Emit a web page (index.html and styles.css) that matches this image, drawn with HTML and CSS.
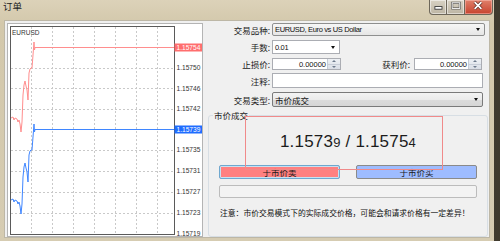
FILE: index.html
```html
<!DOCTYPE html>
<html>
<head>
<meta charset="utf-8">
<link rel="stylesheet" href="styles.css">
</head>
<body>
<div class="win">
  <div class="titlebar">
    <span class="title">订单</span>
    <div class="caps">
      <div class="cap min"><svg width="18" height="14" viewBox="0 0 18 14"><rect x="5.5" y="6.5" width="8" height="3" fill="#fff" stroke="#3a3a3a"/></svg></div>
      <div class="cap max"><svg width="18" height="14" viewBox="0 0 18 14"><rect x="5.5" y="2.5" width="8" height="6" fill="none" stroke="#3a3a3a" stroke-width="2"/><rect x="5.5" y="2.5" width="8" height="6" fill="none" stroke="#fff" stroke-width="1"/></svg></div>
      <div class="cap close"><svg width="28" height="14" viewBox="0 0 28 14"><path d="M10 2 L17 9 M17 2 L10 9" stroke="#5a2a20" stroke-width="3.2"/><path d="M10 2 L17 9 M17 2 L10 9" stroke="#fff" stroke-width="1.8"/></svg></div>
    </div>
  </div>
  <div class="client">
    <div class="chartbox">
      <svg class="chart" width="194" height="212" viewBox="1 1 194 212">
        <rect x="3.5" y="3.5" width="164" height="208" fill="#fff" stroke="#5a5a5a"/>
        <g stroke="#c9c9c9" stroke-dasharray="2 2" stroke-width="1">
          <path d="M24.5 4V211M45.5 4V211M66.5 4V211M87.5 4V211M108.5 4V211M129.5 4V211M150.5 4V211"/>
          <path d="M4 45.5H167M4 65.5H167M4 86.5H167M4 127.5H167M4 148.5H167M4 169.5H167M4 190.5H167"/>
        </g>
        <polyline fill="none" stroke="#ff8e8e" stroke-width="1" points="4,95 6,94 7,97 8,95 10,96 11,99 12,97 13,101 14,109 15,99 16,72 17,62 18,58 19,63 20,67 21,77 22,50 23,46 24,45 25,45 26,32 27,19 27.5,27 28,24.5 167,24.5"/>
        <polyline fill="none" stroke="#3f86ff" stroke-width="1" points="4,177 6,176 7,179 8,177 10,178 11,181 12,179 13,183 14,191 15,181 16,154 17,144 18,140 19,145 20,149 21,159 22,132 23,128 24,127 25,127 26,114 27,101 27.5,109 28,106.5 167,106.5"/>
        <text x="5" y="11.5" class="sym">EURUSD</text>
        <rect x="167.5" y="20.5" width="28" height="8" fill="#ff6e6e"/>
        <rect x="167.5" y="102.5" width="28" height="8" fill="#1f6dff"/>
        <g class="axis">
          <text x="169.5" y="26.8" fill="#fff">1.15754</text>
          <text x="169.5" y="47.3">1.15750</text>
          <text x="169.5" y="67.8">1.15746</text>
          <text x="169.5" y="88.3">1.15742</text>
          <text x="169.5" y="108.8" fill="#fff">1.15739</text>
          <text x="169.5" y="129.3">1.15735</text>
          <text x="169.5" y="150.3">1.15731</text>
          <text x="169.5" y="171.3">1.15727</text>
          <text x="169.5" y="192.3">1.15723</text>
          <text x="169.5" y="212.5">1.15719</text>
        </g>
      </svg>
    </div>
    <div class="form">
      <div class="row r1">
        <span class="lbl">交易品种:</span>
        <div class="select w213"><span class="val">EURUSD, Euro vs US Dollar</span><i class="arr"></i></div>
      </div>
      <div class="row r2">
        <span class="lbl">手数:</span>
        <div class="combo w68"><span class="val">0.01</span><i class="arr"></i></div>
      </div>
      <div class="row r3">
        <span class="lbl">止损价:</span>
        <div class="num w69"><span class="nv">0.00000</span><div class="spin"><span class="up"></span><span class="dn"></span></div></div>
        <span class="lbl lbl2">获利价:</span>
        <div class="num w68"><span class="nv">0.00000</span><div class="spin"><span class="up"></span><span class="dn"></span></div></div>
      </div>
      <div class="row r4">
        <span class="lbl">注释:</span>
        <div class="input w211"></div>
      </div>
      <div class="row r5">
        <span class="lbl">交易类型:</span>
        <div class="select gray w211"><span class="val cjk">市价成交</span><i class="arr"></i></div>
      </div>
      <div class="group">
        <div class="legend">市价成交</div>
        <div class="quote">1.1573<span class="pip">9</span> / 1.1575<span class="pip">4</span></div>
        <div class="btns">
          <div class="btn sell">于市价卖</div>
          <div class="btn buy">于市价买</div>
        </div>
        <div class="progress"></div>
        <div class="note">注意：市价交易模式下的实际成交价格，可能会和请求价格有一定差异！</div>
        <div class="mark"></div>
      </div>
    </div>
  </div>
</div>
</body>
</html>
```

FILE: styles.css
```css
html, body {
  margin: 0;
  padding: 0;
}
body {
  width: 500px;
  height: 241px;
  overflow: hidden;
  background: linear-gradient(90deg, #7a6f58, #3f3a2e);
  font-family: "Noto Sans CJK SC", "Liberation Sans", sans-serif;
  color: #1a1a1a;
}
.win {
  width: 494px;
  height: 241px;
  background: linear-gradient(180deg, #dcd2b9 0%, #d3c8ab 10%, #d6ccb2 100%);
  display: flex;
  flex-direction: column;
}
.titlebar {
  height: 20px;
  display: flex;
  justify-content: space-between;
  align-items: flex-start;
}
.title {
  font-size: 9.5px;
  line-height: 12px;
  margin: 0 0 0 3px;
  color: #1e1e1e;
}
.caps {
  display: flex;
  margin-right: 1px;
}
.cap {
  height: 15px;
  box-sizing: border-box;
  border: 1px solid #6d675a;
  border-top: none;
  display: flex;
}
.cap svg { display: block; }
.cap.min {
  width: 18px;
  border-radius: 0 0 0 4px;
  background: linear-gradient(180deg, #d8d2c4, #bdb5a3);
  box-shadow: inset 0 0 0 1px rgba(255,255,255,0.5);
}
.cap.max {
  width: 18px;
  border-left: none;
  background: linear-gradient(180deg, #d8d2c4, #bdb5a3);
  box-shadow: inset 0 0 0 1px rgba(255,255,255,0.5);
}
.cap.close {
  width: 28px;
  border-left: none;
  border-radius: 0 0 4px 0;
  background: linear-gradient(180deg, #e0806a, #c7432e);
  box-shadow: inset 0 0 0 1px rgba(255,200,190,0.5);
}
.client {
  flex: 1;
  margin: 0 4px 3px 4px;
  background: #f0f0f0;
  border: 1px solid #bdb7a6;
  display: flex;
  align-items: flex-start;
}
.chartbox {
  width: 196px;
  height: 214px;
  box-sizing: border-box;
  margin: 2px 0 0 2px;
  background: #fff;
  border: 1px solid #b4b4b4;
}
.chart {
  display: block;
}
.sym {
  font-family: "Liberation Sans", sans-serif;
  font-size: 6.5px;
  fill: #333;
}
.axis text {
  font-family: "Liberation Sans", sans-serif;
  font-size: 6.6px;
  fill: #333;
}
.axis text[fill="#fff"] { fill: #fff; }
.form {
  flex: 1;
  margin-left: 5px;
  padding-top: 2px;
  display: flex;
  flex-direction: column;
}
.row {
  display: flex;
  align-items: stretch;
}
.r1 { height: 13px; margin-bottom: 4px; }
.r2 { height: 14px; margin-bottom: 4px; }
.r3 { height: 12px; margin-bottom: 3px; }
.r4 { height: 15px; margin-bottom: 4px; }
.r5 { height: 15px; }
.lbl {
  width: 62px;
  margin-right: 2px;
  text-align: right;
  font-size: 8.5px;
  line-height: 12px;
  align-self: center;
  white-space: nowrap;
  color: #1a1a1a;
}
.lbl2 {
  width: 69px;
  margin-right: 4px;
}
.w213 { width: 213px; }
.w211 { width: 211px; }
.w69 { width: 69px; }
.w68 { width: 68px; }
.select, .combo, .input, .num {
  box-sizing: border-box;
  display: flex;
  align-items: center;
  position: relative;
}
.select {
  border: 1px solid #8e8f8f;
  border-radius: 2px;
  background: linear-gradient(180deg, #f6f6f6, #e6e6e6);
}
.select.gray {
  background: linear-gradient(180deg, #f3f3f3 0%, #ebebeb 50%, #dcdcdc 51%, #d6d6d6 100%);
  border-color: #7a7a7a;
}
.combo {
  border: 1px solid #abadb3;
  background: #fff;
}
.input {
  border: 1px solid #abadb3;
  background: #fff;
}
.num {
  border: 1px solid #abadb3;
  background: #fff;
  justify-content: flex-end;
}
.val {
  font-family: "Liberation Sans", sans-serif;
  font-size: 7.5px;
  letter-spacing: -0.35px;
  padding-left: 2px;
  flex: 1;
  white-space: nowrap;
  color: #111;
}
.val.cjk {
  font-family: "Noto Sans CJK SC", sans-serif;
  font-size: 8.5px;
  letter-spacing: 0;
}
.nv {
  font-family: "Liberation Sans", sans-serif;
  font-size: 7.5px;
  padding-right: 1px;
  color: #111;
}
.arr {
  width: 0;
  height: 0;
  border-left: 2.5px solid transparent;
  border-right: 2.5px solid transparent;
  border-top: 3px solid #111;
  margin-right: 4px;
}
.spin {
  width: 12px;
  align-self: stretch;
  display: flex;
  flex-direction: column;
  border-left: 1px solid #c5ccd6;
  background: linear-gradient(180deg, #eef1f5, #d9dee6);
}
.spin span {
  flex: 1;
  display: flex;
  align-items: center;
  justify-content: center;
}
.spin .up { border-bottom: 1px solid #c8ced8; }
.spin .up::after {
  content: "";
  border-left: 2px solid transparent;
  border-right: 2px solid transparent;
  border-bottom: 2px solid #6d7a8c;
}
.spin .dn::after {
  content: "";
  border-left: 2px solid transparent;
  border-right: 2px solid transparent;
  border-top: 2px solid #6d7a8c;
}
.group {
  position: relative;
  width: 280px;
  height: 122px;
  box-sizing: border-box;
  margin-top: 8px;
  border: 1px solid #d7dee4;
  border-radius: 3px;
  padding: 0 10px;
}
.legend {
  width: max-content;
  margin: -7px 0 0 -6px;
  padding: 0 1px;
  background: #f0f0f0;
  font-size: 8.5px;
  line-height: 12px;
  color: #1a1a1a;
}
.quote {
  margin-top: 11px;
  font-family: "Liberation Sans", sans-serif;
  font-size: 17px;
  line-height: 20px;
  text-align: center;
  color: #1c1c1c;
  letter-spacing: 0.2px;
}
.pip {
  font-size: 13px;
}
.btns {
  margin-top: 12px;
  display: flex;
  justify-content: space-between;
}
.btn {
  width: 121px;
  height: 14px;
  box-sizing: border-box;
  border-radius: 2px;
  font-size: 8.5px;
  line-height: 12px;
  text-align: center;
  color: #1a1a1a;
}
.sell {
  background: #ff8080;
  border: 1px solid #6fa8cf;
  box-shadow: inset 0 0 0 1px #c6e2f2;
}
.buy {
  background: #9ebcff;
  border: 1px solid #8a8a8a;
}
.progress {
  margin-top: 6px;
  height: 13px;
  box-sizing: border-box;
  border: 1px solid #bcbcbc;
  border-radius: 2px;
  background: #f3f3f3;
}
.note {
  margin-top: 9px;
  margin-left: 1px;
  font-size: 7.8px;
  line-height: 12px;
  white-space: nowrap;
  color: #111;
}
.mark {
  position: absolute;
  left: 36px;
  top: 0;
  width: 198px;
  height: 54px;
  box-sizing: border-box;
  border: 1px solid #f08a8a;
}
```
